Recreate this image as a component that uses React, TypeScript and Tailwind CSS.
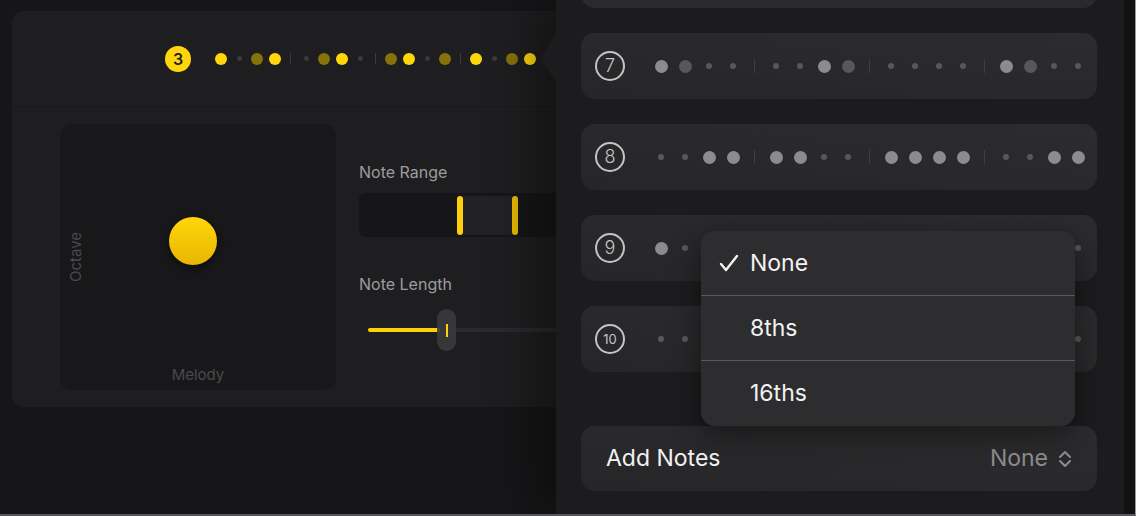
import React from 'react'

// header pattern: y = bright yellow, d = dim yellow, o = off, | = bar line
const HEADER = ['y', 'o', 'd', 'y', '|', 'o', 'd', 'y', 'o', '|', 'd', 'y', 'o', 'd', '|', 'y', 'o', 'd', 'y']

// row patterns: L = light big, D = dim big, s = small
const ROWS: { n: string; dots: string[] }[] = [
  { n: '7', dots: ['L', 'D', 's', 's', '|', 's', 's', 'L', 'D', '|', 's', 's', 's', 's', '|', 'L', 'D', 's', 's'] },
  { n: '8', dots: ['s', 's', 'L', 'L', '|', 'L', 'L', 's', 's', '|', 'L', 'L', 'L', 'L', '|', 's', 's', 'L', 'L'] },
  { n: '9', dots: ['L', 's', 's', 'L', '|', 'L', 's', 's', 's', '|', 'L', 's', 'L', 's', '|', 's', 'L', 's', 's'] },
  { n: '10', dots: ['s', 's', 'L', 's', '|', 's', 'L', 'L', 's', '|', 's', 's', 'L', 'L', '|', 'L', 's', 's', 's'] },
]

function HeaderDots() {
  return (
    <div className="flex items-center ml-[21px]">
      {HEADER.map((d, i) =>
        d === '|' ? (
          <div key={i} className="w-[13px] flex justify-center">
            <div className="w-px h-[11px] bg-[#3a3a3c]" />
          </div>
        ) : (
          <div key={i} className="w-[18px] flex justify-center">
            {d === 'o' ? (
              <div className="w-[5px] h-[5px] rounded-full bg-[#3a3a3c]" />
            ) : (
              <div
                className={
                  d === 'y'
                    ? 'w-[12px] h-[12px] rounded-full bg-[#ffd60a]'
                    : 'w-[12px] h-[12px] rounded-full bg-[#857208]'
                }
              />
            )}
          </div>
        )
      )}
    </div>
  )
}

function PatternRow({ n, dots }: { n: string; dots: string[] }) {
  return (
    <div className="h-[66px] shrink-0 rounded-[14px] bg-gradient-to-tr from-[#262628] to-[#2c2c2e] flex items-center pl-[14px]">
      <div className="w-[30px] h-[30px] rounded-full border-2 border-[#c4c4c6] flex items-center justify-center text-[#c4c4c6]">
        <span className={n.length > 1 ? 'text-[13px] leading-none' : 'text-[18px] font-light leading-none'}>{n}</span>
      </div>
      <div className="flex items-center ml-[24px]">
        {dots.map((d, i) =>
          d === '|' ? (
            <div key={i} className="w-[19px] flex justify-center">
              <div className="w-px h-[14px] bg-[#3e3e40]" />
            </div>
          ) : (
            <div key={i} className="w-[24px] flex justify-center">
              {d === 's' ? (
                <div className="w-[6px] h-[6px] rounded-full bg-[#58585a]" />
              ) : (
                <div
                  className={
                    d === 'L'
                      ? 'w-[13px] h-[13px] rounded-full bg-[#8c8c8e]'
                      : 'w-[13px] h-[13px] rounded-full bg-[#58585a]'
                  }
                />
              )}
            </div>
          )
        )}
      </div>
    </div>
  )
}

export default function App() {
  return (
    <div className="relative w-[1136px] h-[516px] overflow-hidden bg-[#161618] font-[Inter,sans-serif] border-b-2 border-r border-b-[#58585a] border-r-[#9a9a9a]">
      {/* Main card */}
      <div className="pl-[12px] pt-[11px]">
        <div className="w-[600px] h-[396px] rounded-[12px] bg-[#1e1e20] flex flex-col">
          {/* Header */}
          <div className="h-[96px] border-b border-[#19191b] flex items-center pl-[153px]">
            <div className="w-[26px] h-[26px] rounded-full bg-[#ffd60a] flex items-center justify-center text-[16px] font-semibold text-[#1c1c1e]">
              3
            </div>
            <HeaderDots />
          </div>

          {/* Body */}
          <div className="flex pt-[17px] pl-[48px]">
            {/* XY pad */}
            <div className="relative w-[276px] h-[266px] rounded-[12px] bg-[#18181a] shrink-0">
              <span className="absolute left-[7px] top-1/2 -translate-y-1/2 rotate-180 [writing-mode:vertical-rl] text-[15px] leading-[18px] text-[#4a4a4c]">
                Octave
              </span>
              <div className="absolute left-[109px] top-[93px] w-[48px] h-[48px] rounded-full bg-gradient-to-b from-[#ffd60a] to-[#e8b600] shadow-[0_3px_8px_rgba(0,0,0,0.55)]" />
              <span className="absolute bottom-[5px] left-0 right-0 text-center text-[15px] leading-[20px] text-[#4a4a4c]">
                Melody
              </span>
            </div>

            {/* Controls */}
            <div className="flex flex-col ml-[23px] w-[260px] pt-[38px]">
              <span className="text-[16px] leading-[20px] text-[#9c9c9e]">Note Range</span>
              <div className="mt-[11px] h-[44px] rounded-[6px] bg-[#161618] flex items-start pt-[3px] pl-[98px]">
                <div className="w-[6px] h-[39px] rounded-full bg-[#ffd00a]" />
                <div className="w-[49px] h-[39px] bg-[#222224]" />
                <div className="w-[6px] h-[39px] rounded-full bg-[#e8b800]" />
              </div>

              <span className="mt-[37px] text-[16px] leading-[20px] text-[#9c9c9e]">Note Length</span>
              <div className="relative mt-[15px] h-[42px] flex items-center pl-[9px]">
                <div className="w-[72px] h-[4px] rounded-l-full bg-[#ffd00a]" />
                <div className="flex-1 h-[4px] bg-[#2a2a2c]" />
                <div className="absolute left-[78px] top-0 w-[19px] h-[42px] rounded-full bg-[#3a3a3c]/90 flex items-center justify-center">
                  <div className="w-[2px] h-[13px] bg-[#ffd00a]" />
                </div>
              </div>
            </div>
          </div>
        </div>
      </div>

      {/* Popover panel */}
      <div className="absolute left-[556px] top-0 w-[568px] h-[516px] bg-[#1c1c1e] shadow-[-24px_0_40px_rgba(0,0,0,0.35)] flex flex-col pl-[25px] pr-[27px] gap-[25px]">
        <svg className="absolute left-[-16px] top-[33px]" width="17" height="50" viewBox="0 0 17 50">
          <path d="M17 0 L3 20 Q0 25 3 30 L17 50 Z" fill="#1c1c1e" />
        </svg>

        <div className="h-[66px] shrink-0 -mt-[58px] rounded-[14px] bg-[#2a2a2c]" />
        {ROWS.map(r => (
          <PatternRow key={r.n} n={r.n} dots={r.dots} />
        ))}

        <div className="mt-[29px] h-[65px] shrink-0 rounded-[14px] bg-gradient-to-tr from-[#262628] to-[#2c2c2e] flex items-center justify-between pl-[25px] pr-[25px]">
          <span className="text-[23px] text-[#f2f2f2]">Add Notes</span>
          <div className="flex items-center gap-[10px]">
            <span className="text-[23px] text-[#8e8e90]">None</span>
            <svg width="14" height="18" viewBox="0 0 14 18" fill="none" stroke="#8e8e90" strokeWidth="2" strokeLinecap="round" strokeLinejoin="round">
              <path d="M2 7 L7 2 L12 7" />
              <path d="M2 11 L7 16 L12 11" />
            </svg>
          </div>
        </div>

        {/* Dropdown menu */}
        <div className="absolute left-[145px] top-[231px] w-[374px] rounded-[14px] bg-[#2d2d2f] shadow-[0_8px_30px_rgba(0,0,0,0.45)] flex flex-col">
          <div className="h-[65px] flex items-center pl-[18px] border-b border-[#58585a]">
            <svg width="20" height="18" viewBox="0 0 20 18" fill="none" stroke="#f2f2f2" strokeWidth="2.4" strokeLinecap="round" strokeLinejoin="round">
              <path d="M2 10 L7 16 L18 2" />
            </svg>
            <span className="ml-[11px] text-[23px] text-[#f2f2f2]">None</span>
          </div>
          <div className="h-[65px] flex items-center pl-[49px] border-b border-[#58585a]">
            <span className="text-[23px] text-[#f2f2f2]">8ths</span>
          </div>
          <div className="h-[65px] flex items-center pl-[49px]">
            <span className="text-[23px] text-[#f2f2f2]">16ths</span>
          </div>
        </div>
      </div>

      {/* Right dark strip */}
      <div className="absolute right-0 top-0 w-[11px] h-full bg-[#111312]" />
    </div>
  )
}
